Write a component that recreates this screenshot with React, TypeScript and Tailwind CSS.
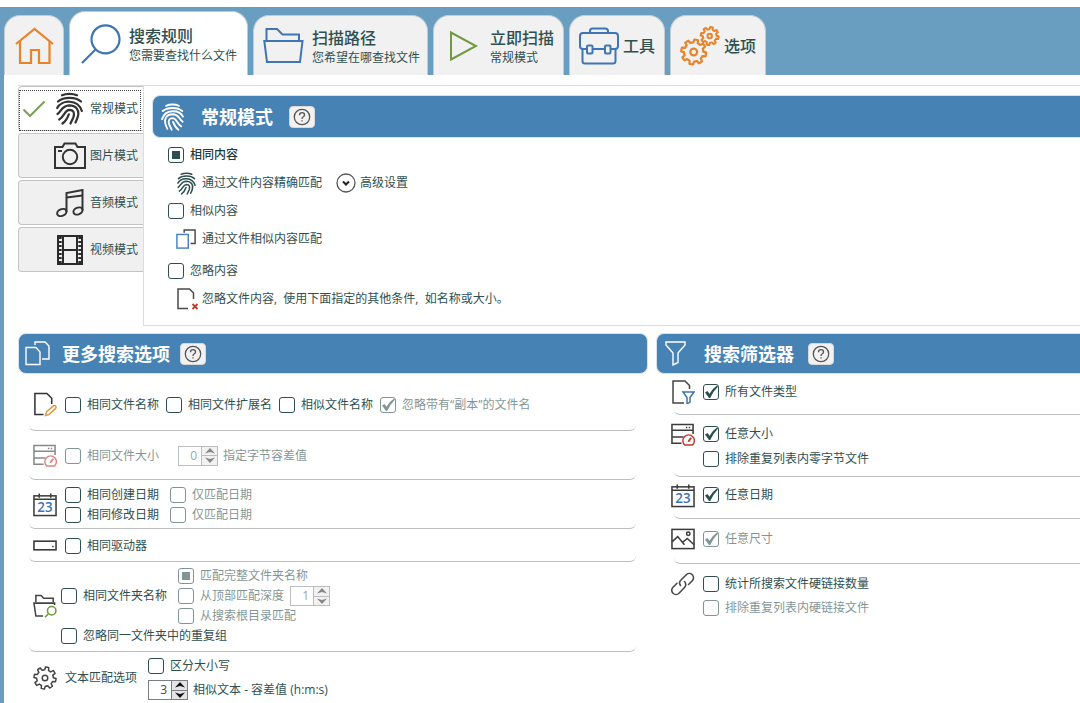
import { useState, type ReactNode } from "react";
import clsx from "clsx";

type IconProps = { className?: string };

// Outline of a gear with eight teeth, centred on cx / cy
const gearPath = (cx: number, cy: number, outer: number, inner: number) => {
  const teeth = 8;
  const step = (Math.PI * 2) / teeth;
  const at = (r: number, a: number) =>
    `${(cx + r * Math.cos(a)).toFixed(2)} ${(cy + r * Math.sin(a)).toFixed(2)}`;
  let d = "";
  for (let i = 0; i < teeth; i++) {
    const a = i * step + 0.2;
    d += `${i ? "L" : "M"}${at(inner, a - step * 0.3)}L${at(outer, a - step * 0.19)}`;
    d += `A${outer} ${outer} 0 0 1 ${at(outer, a + step * 0.19)}L${at(inner, a + step * 0.3)}`;
    d += `A${inner} ${inner} 0 0 1 ${at(inner, a + step * 0.7)}`;
  }
  return d + "Z";
};

const HomeIcon = () => (
  <svg className="w-[39px] h-[38px]" viewBox="0 0 39 38" fill="none" stroke="#e8832a" strokeWidth="2.2">
    <path d="M1 17L19.5 2L38 17" />
    <path d="M5 14V36H16V23H24V36H34.5V14" />
  </svg>
);

const SearchIcon = () => (
  <svg className="w-[42px] h-[42px]" viewBox="0 0 42 42" fill="none" stroke="#3f74b5" strokeWidth="2.2">
    <circle cx="25.5" cy="16.3" r="14" />
    <path d="M15.5 26.5L2 40" />
  </svg>
);

const FolderIcon = () => (
  <svg className="w-[41px] h-[37px]" viewBox="0 0 41 37" fill="none" stroke="#3f74b5" strokeWidth="2">
    <path d="M3.5 13V2H14L19.5 7.5H36V13" />
    <path d="M1.3 14H39.5L37 35H4Z" />
  </svg>
);

const PlayIcon = () => (
  <svg className="w-[29px] h-8" viewBox="0 0 29 32" fill="none" stroke="#6f9a3e" strokeWidth="2">
    <path d="M2 2.5V29.5L27 16Z" />
  </svg>
);

const ToolboxIcon = () => (
  <svg className="w-10 h-[38px]" viewBox="0 0 40 38" fill="none" stroke="#3f74b5" strokeWidth="2">
    <path d="M11 6V4Q11 1.5 13.5 1.5H26Q29 1.5 29 4V6" />
    <path d="M7.5 22H4Q1 22 1 19V9Q1 6 4 6H36Q39 6 39 9V19Q39 22 36 22H31.5M13.5 22H25.5" />
    <path d="M3.5 22V34Q3.5 36.5 6 36.5H34Q36.5 36.5 36.5 34V22" />
    <rect x="8" y="18.5" width="5.5" height="8" rx="1" />
    <rect x="26" y="18.5" width="5.5" height="8" rx="1" />
  </svg>
);

const GearsIcon = () => (
  <svg className="w-10 h-10" viewBox="0 0 40 40" fill="none" stroke="#e8832a" strokeWidth="2.2" strokeLinejoin="round">
    <path d={gearPath(13.7, 26, 12.5, 9.6)} />
    <circle cx="13.7" cy="26" r="3.4" />
    <path d={gearPath(29.7, 10, 9, 6.8)} strokeWidth="2" />
    <circle cx="29.7" cy="10" r="2.2" strokeWidth="2" />
  </svg>
);

const Fingerprint = ({ className }: IconProps) => (
  <svg className={className} viewBox="0 0 27 33" fill="none" stroke="currentColor" strokeWidth="2.2" strokeLinecap="round">
    <path d="M6 3.3C10 1.300 17 1.300 21 3.300" />
    <path d="M2 9.500C7.500 4.600 19.500 4.600 25 9.500" />
    <path d="M1.200 16C5.500 7.500 22 6.800 25.800 19" />
    <path d="M1.500 22C6 19 5.500 13.600 13.300 13.300C20.500 13.300 23.300 18.500 22 24C21.500 26.500 20.500 28.500 19.500 30.500" />
    <path d="M3.200 27.500C8.500 24.500 8.500 18 13.300 17.800C18 17.800 18.800 21.500 17.300 25.500L14.500 31.500" />
    <path d="M6.500 31.500C10 29 11.500 26 12.800 22.300" />
  </svg>
);

const CameraIcon = () => (
  <svg className="w-8 h-7" viewBox="0 0 32 28" fill="none" stroke="#333" strokeWidth="2">
    <path d="M1 5H8.5L10.5 1.5H21.5L23.5 5H31V26H1Z" />
    <circle cx="16" cy="15" r="7.2" />
    <path d="M4 9H8" />
  </svg>
);

const MusicIcon = () => (
  <svg className="w-7 h-7" viewBox="0 0 28 28" fill="none" stroke="#333" strokeWidth="2">
    <path d="M10.500 23V4L26.500 1V21.500" />
    <path d="M10.500 8.500L26.500 6.500" />
    <ellipse cx="5.800" cy="23.500" rx="4.800" ry="3.300" transform="rotate(-22 5.800 23.500)" />
    <ellipse cx="22" cy="22" rx="4.700" ry="3.300" transform="rotate(-22 22 22)" />
  </svg>
);

const FilmIcon = () => (
  <svg className="w-[26px] h-[30px]" viewBox="0 0 26 30" fill="none" stroke="#2b2b2b" strokeWidth="2">
    <rect x="1" y="1" width="24" height="28" />
    <path d="M6 1V29M20 1V29M6 15H20" />
    <path d="M3.2 2V28M22.8 2V28" strokeWidth="3" strokeDasharray="2 2" />
  </svg>
);

const CopiesIcon = () => (
  <svg className="w-[22px] h-[22px]" viewBox="0 0 22 22" fill="none" strokeWidth="1.6">
    <path d="M9 4V1H21V16H16" stroke="#4a4a4a" />
    <rect x="1" y="6" width="12.5" height="15" stroke="#4a80c4" />
  </svg>
);

const PagesIcon = () => (
  <svg className="w-[25px] h-[25px]" viewBox="0 0 25 25" fill="none" stroke="#fff" strokeWidth="1.4">
    <path d="M1 6.5H11L15 11V23.5H1Z" />
    <path d="M10 4V1H20L24 5V18H17" />
  </svg>
);

const DocDeleteIcon = () => (
  <svg className="w-[22px] h-[22px]" viewBox="0 0 22 22" fill="none">
    <path d="M11 20.5H1V1H12.5L16.5 5V11" stroke="#4a4a4a" strokeWidth="1.5" />
    <path d="M15.5 16L20.5 21M20.5 16L15.5 21" stroke="#c0392b" strokeWidth="1.8" />
  </svg>
);

const DocEditIcon = () => (
  <svg className="w-[25px] h-[25px]" viewBox="0 0 25 25" fill="none">
    <path d="M11 23H2V1H14.5L19.5 6V12" stroke="#333" strokeWidth="1.6" />
    <path d="M13 24L14.2 20L21.5 13.8Q23.5 13 24 15Q24.2 16 23.3 16.8L16.5 23Z" stroke="#d99a3c" strokeWidth="1.5" />
  </svg>
);

const DocFilterIcon = () => (
  <svg className="w-6 h-6" viewBox="0 0 24 24" fill="none">
    <path d="M13 23H2V1H14L18.5 5.5V9" stroke="#444" strokeWidth="1.5" />
    <path d="M12 12H23L19 17.5V22L16 24V17.5Z" stroke="#3f74b5" strokeWidth="1.5" />
  </svg>
);

const SizeIcon = () => (
  <svg className="w-[25px] h-6" viewBox="0 0 25 24" fill="none">
    <path d="M23 11V1H1V20.5H11M1 7H23M1 14H13" stroke="#3c3c3c" strokeWidth="1.6" />
    <path d="M15.5 4.2H17M18.5 4.2H20" stroke="#3c3c3c" strokeWidth="1.5" />
    <path d="M14.5 22.5A6 6 0 1 1 22.2 22.5Z" stroke="#c0392b" strokeWidth="1.5" strokeLinejoin="round" />
    <path d="M18 19L21 14.8" stroke="#c0392b" strokeWidth="2" />
  </svg>
);

const CalendarIcon = () => (
  <svg className="w-[25px] h-[25px]" viewBox="0 0 25 25" fill="none" stroke="#3c3c3c">
    <rect x="1" y="3.5" width="23" height="20.5" strokeWidth="1.6" />
    <path d="M1 7H24M6.5 1V5.500M18.500 1V5.500" strokeWidth="1.6" />
    <text x="12.5" y="20.8" textAnchor="middle" fill="#3f74b5" stroke="none" fontSize="14" fontWeight="600" fontFamily="Open Sans, sans-serif">
      23
    </text>
  </svg>
);

const DriveIcon = () => (
  <svg className="w-[25px] h-[11px]" viewBox="0 0 25 11" fill="none" stroke="#333">
    <rect x="1" y="1" width="23" height="9" strokeWidth="1.6" />
    <path d="M20 6.5H21.5" strokeWidth="1.5" />
  </svg>
);

const FolderSearchIcon = () => (
  <svg className="w-[25px] h-[25px]" viewBox="0 0 25 25" fill="none">
    <path d="M3 8V1H8.5L11 4H21V8" stroke="#444" strokeWidth="1.6" />
    <path d="M10.5 22.5H3L1 9H22.5V11" stroke="#444" strokeWidth="1.6" />
    <circle cx="19.5" cy="17" r="4.4" stroke="#6f9a3e" strokeWidth="1.6" />
    <path d="M16 20L12.5 23.8" stroke="#6f9a3e" strokeWidth="1.6" />
  </svg>
);

const SettingsIcon = () => (
  <svg className="w-[26px] h-[26px]" viewBox="0 0 26 26" fill="none" stroke="#444" strokeWidth="1.6" strokeLinejoin="round">
    <path d={gearPath(13, 13, 12, 9)} />
    <circle cx="13" cy="13" r="3" />
  </svg>
);

const ImageIcon = () => (
  <svg className="w-[25px] h-[22px]" viewBox="0 0 25 22" fill="none" stroke="#3c3c3c" strokeWidth="1.6">
    <rect x="1" y="1" width="23" height="20" />
    <path d="M1 14L7 8.5L14 17M12 14.5L17 10.5L24 17" />
    <circle cx="18" cy="5.5" r="1.8" />
  </svg>
);

const LinkIcon = () => (
  <svg className="w-6 h-6" viewBox="0 0 24 24" fill="none" stroke="#4a4a4a" strokeWidth="1.6" strokeLinecap="round">
    <path d="M9.5 13.5A4.2 4.2 0 0 1 10 8L15.3 2.7A4.2 4.2 0 0 1 21.3 8.7L17.5 12.5" />
    <path d="M13.5 9.5A4.2 4.2 0 0 1 13.5 15.5L8 21.3A4.2 4.2 0 0 1 2 15.3L6 11.3" />
  </svg>
);

const FunnelIcon = () => (
  <svg className="w-[21px] h-[25px]" viewBox="0 0 21 25" fill="none" stroke="#fff" strokeWidth="1.4">
    <path d="M1 1H20V4L13 12V21.5L8 24V12L1 4Z" />
  </svg>
);

type OptionProps = {
  label: string;
  type?: "checkbox" | "radio";
  name?: string;
  checked?: boolean;
  disabled?: boolean;
  strong?: boolean;
};

const Option = ({ label, type = "checkbox", name, checked, disabled, strong }: OptionProps) => (
  <label className={clsx("flex items-center gap-1.5 whitespace-nowrap", disabled && "opacity-60", strong && "font-medium text-[#1f3a3a]")}>
    <span className="grid">
      <input
        type={type}
        name={name}
        defaultChecked={checked}
        disabled={disabled}
        className="peer col-start-1 row-start-1 size-4 appearance-none rounded-[3px] border border-[#2f4f4f] bg-white"
      />
      {type === "radio" ? (
        <span className="pointer-events-none col-start-1 row-start-1 hidden size-2 place-self-center bg-[#2f4f4f] peer-checked:block" />
      ) : (
        <svg
          className="pointer-events-none col-start-1 row-start-1 hidden size-4 peer-checked:block"
          viewBox="0 0 16 16"
          fill="#2f4f4f"
        >
          <path d="M2 8.5L4.5 7L6.500 9.700Q9.500 4.500 14 1.500L15 2.500Q10.500 7 7.200 14H6Z" />
        </svg>
      )}
    </span>
    {label}
  </label>
);

type SpinnerProps = { label: string; value: number; disabled?: boolean };

const Spinner = ({ label, value, disabled }: SpinnerProps) => {
  const [count, setCount] = useState(value);
  return (
    <span className={clsx("flex h-5 w-10 border border-[#7a7f85] bg-white", disabled && "opacity-50")}>
      <input
        type="number"
        aria-label={label}
        value={count}
        onChange={(e) => setCount(Number(e.target.value))}
        disabled={disabled}
        className="w-[22px] pr-1 text-right text-xs [appearance:textfield] [&::-webkit-inner-spin-button]:appearance-none"
      />
      <span className="flex w-4 flex-col border-l border-[#7a7f85]">
        <button
          type="button"
          aria-label="增加"
          disabled={disabled}
          onClick={() => setCount(count + 1)}
          className="flex flex-1 items-center justify-center border-b border-[#7a7f85] bg-[#e4e4e4]"
        >
          <svg className="h-1.5 w-2.5" viewBox="0 0 10 6" fill="#111"><path d="M0 5.5L5 0L10 5.500L5 4Z" /></svg>
        </button>
        <button
          type="button"
          aria-label="减少"
          disabled={disabled}
          onClick={() => setCount(count - 1)}
          className="flex flex-1 items-center justify-center bg-[#e4e4e4]"
        >
          <svg className="h-1.5 w-2.5" viewBox="0 0 10 6" fill="#111"><path d="M0 0.5L5 6L10 0.500L5 2Z" /></svg>
        </button>
      </span>
    </span>
  );
};

const HelpButton = () => (
  <button
    type="button"
    aria-label="帮助"
    className="flex h-[22px] w-[26px] items-center justify-center rounded border border-[#d8d8d8] bg-[#f2f2f2]"
  >
    <svg className="size-[18px]" viewBox="0 0 18 18" fill="none" stroke="#555" strokeWidth="1.3">
      <circle cx="9" cy="9" r="7.7" />
      <path d="M6.5 7.2Q6.500 4.700 9 4.700Q11.500 4.700 11.500 6.900Q11.500 8.200 10 9Q9 9.600 9 11" />
      <path d="M9 12.2V13.6" />
    </svg>
  </button>
);

type TabProps = { icon: ReactNode; title?: string; subtitle?: string; label?: string; active?: boolean; className?: string };

const Tab = ({ icon, title, subtitle, label, active, className }: TabProps) => (
  <button
    type="button"
    role="tab"
    aria-selected={!!active}
    aria-label={label}
    className={clsx(
      "flex items-center whitespace-nowrap rounded-t-2xl border border-b-0 border-[#c3cbd1] text-left",
      active ? "h-16 bg-white" : "h-[60px] bg-[#f1f1f1]",
      className
    )}
  >
    {icon}
    {title && (
      <span>
        <span className="block text-base leading-6 font-medium">{title}</span>
        {subtitle && <span className="block leading-4">{subtitle}</span>}
      </span>
    )}
  </button>
);

type ModeProps = { icon: ReactNode; title: string; active?: boolean };

const Mode = ({ icon, title, active }: ModeProps) => (
  <button
    type="button"
    role="tab"
    aria-selected={!!active}
    className={clsx(
      "relative flex h-[45px] items-center justify-end rounded-l border border-r-0 border-[#c4c4c4] pr-[5px]",
      active ? "bg-white" : "bg-[#f0f0f0]"
    )}
  >
    {active && (
      <>
        <svg className="mr-1.5 h-[18px] w-6" viewBox="0 0 24 18" fill="none" stroke="#7ba05b" strokeWidth="2">
          <path d="M1.5 9.5L8 16L22.5 1.5" />
        </svg>
        <span className="absolute inset-x-0 top-[3px] -bottom-px mr-0.5 border border-dotted border-[#444]" />
      </>
    )}
    <span className="mr-0.5 flex w-9 justify-center text-[#333]">{icon}</span>
    <span>{title}</span>
  </button>
);

const Divider = ({ className }: IconProps) => (
  <hr className={clsx("h-1.5 border-0 border-b border-[#bfbfbf]", className)} />
);

const leftDivider = "-mt-1.5 ml-[11px] mr-3 rounded-b-lg";
const rightDivider = "ml-[18px] rounded-bl-lg";

const IconCell = ({ children, className }: { children: ReactNode; className?: string }) => (
  <span className={clsx("flex w-6 shrink-0 justify-center", className)}>{children}</span>
);

const App = () => {
  return (
    <div className="flex min-h-screen flex-col overflow-x-hidden bg-white pt-[7px] font-['Open_Sans','Noto_Sans_CJK_SC',sans-serif] text-xs text-[#2f4f4f]">
      {/* Main tabs */}
      <nav role="tablist" className="flex h-[68px] items-end gap-[5px] bg-[#6a9ec1] pl-1">
        <Tab label="主页" icon={<HomeIcon />} className="w-[60px] justify-center" />
        <Tab active title="搜索规则" subtitle="您需要查找什么文件" icon={<SearchIcon />} className="gap-[7px] px-2.5" />
        <Tab title="扫描路径" subtitle="您希望在哪查找文件" icon={<FolderIcon />} className="gap-2 pr-[7px] pl-[9px]" />
        <Tab title="立即扫描" subtitle="常规模式" icon={<PlayIcon />} className="gap-3 pr-[9px] pl-[15px]" />
        <Tab title="工具" icon={<ToolboxIcon />} className="gap-1 px-[9px]" />
        <Tab title="选项" icon={<GearsIcon />} className="gap-1 px-[9px]" />
      </nav>

      <main className="flex-1 border-l-4 border-[#6a9ec1] pt-2.5 pl-3.5">
        {/* Scan mode */}
        <section className="flex border-t border-[#dcdcdc]">
          <div role="tablist" aria-orientation="vertical" className="flex w-[125px] shrink-0 flex-col gap-0.5">
            <Mode active title="常规模式" icon={<Fingerprint className="h-[33px] w-[27px]" />} />
            <Mode title="图片模式" icon={<CameraIcon />} />
            <Mode title="音频模式" icon={<MusicIcon />} />
            <Mode title="视频模式" icon={<FilmIcon />} />
          </div>

          <div className="flex-1 border-b border-l border-[#dcdcdc] pt-[9px] pb-3 pl-2">
            <header className="flex h-[43px] items-center rounded-l-lg border border-r-0 border-[#d5e3ef] bg-[#4682b4] pl-2 text-white">
              <Fingerprint className="h-7 w-[23px] -scale-x-100" />
              <h2 className="mr-4 ml-[17px] text-lg leading-6 font-bold">常规模式</h2>
              <HelpButton />
            </header>
            <div className="pt-[3px] pl-4">
              <div className="flex h-7 items-center">
                <Option type="radio" name="content" label="相同内容" checked strong />
              </div>
              <div className="flex h-7 items-center pl-2">
                <IconCell className="mr-0.5 pr-1"><Fingerprint className="h-[23px] w-[19px]" /></IconCell>
                通过文件内容精确匹配
                <button type="button" className="ml-3.5 flex items-center gap-1">
                  <svg className="size-5" viewBox="0 0 20 20" fill="none" stroke="#555" strokeWidth="1.3">
                    <circle cx="10" cy="10" r="9" />
                    <path d="M7 8.5L10 11.5L13 8.5" stroke="#222" strokeWidth="2" />
                  </svg>
                  高级设置
                </button>
              </div>
              <div className="flex h-7 items-center">
                <Option type="radio" name="content" label="相似内容" />
              </div>
              <div className="flex h-7 items-center pl-2">
                <IconCell className="mr-0.5 pr-1"><CopiesIcon /></IconCell>
                通过文件相似内容匹配
              </div>
              <div className="mt-1 flex h-7 items-center">
                <Option type="radio" name="content" label="忽略内容" />
              </div>
              <div className="flex h-7 items-center pl-2">
                <IconCell className="mr-0.5"><DocDeleteIcon /></IconCell>
                忽略文件内容,&nbsp; 使用下面指定的其他条件,&nbsp; 如名称或大小。
              </div>
            </div>
          </div>
        </section>

        <div className="mt-[7px] grid grid-cols-[minmax(0,630fr)_minmax(0,424fr)] gap-2">
          {/* More search options */}
          <section>
            <header className="flex h-[41px] items-center rounded-lg border border-[#d5e3ef] bg-[#4682b4] pl-1.5 text-white">
              <PagesIcon />
              <h2 className="mr-2.5 ml-3 text-lg leading-6 font-bold">更多搜索选项</h2>
              <HelpButton />
            </header>

            <div className="flex h-[57px] items-center gap-[7px] pt-1 pl-[15px]">
              <IconCell className="mr-px"><DocEditIcon /></IconCell>
              <Option label="相同文件名称" />
              <Option label="相同文件扩展名" />
              <Option label="相似文件名称" />
              <Option label="忽略带有“副本”的文件名" checked disabled />
            </div>
            <Divider className={leftDivider} />

            <div className="flex h-[49px] items-center pl-[15px]">
              <IconCell className="mr-2 opacity-60"><SizeIcon /></IconCell>
              <Option label="相同文件大小" disabled />
              <div className="ml-[19px] flex items-center gap-[5px]">
                <Spinner label="指定字节容差值" value={0} disabled />
                <span className="opacity-60">指定字节容差值</span>
              </div>
            </div>
            <Divider className={leftDivider} />

            <div className="flex h-[49px] items-center gap-2 pl-[15px]">
              <IconCell><CalendarIcon /></IconCell>
              <div>
                <div className="flex h-5 items-center gap-[11px]">
                  <Option label="相同创建日期" />
                  <Option label="仅匹配日期" disabled />
                </div>
                <div className="flex h-5 items-center gap-[11px]">
                  <Option label="相同修改日期" />
                  <Option label="仅匹配日期" disabled />
                </div>
              </div>
            </div>
            <Divider className={leftDivider} />

            <div className="flex h-[33px] items-center gap-2 pl-[15px]">
              <IconCell><DriveIcon /></IconCell>
              <Option label="相同驱动器" />
            </div>
            <Divider className={leftDivider} />

            <div className="flex h-[90px] items-center gap-1 pb-0.5 pl-[15px]">
              <IconCell><FolderSearchIcon /></IconCell>
              <div>
                <div className="flex items-center gap-[11px]">
                  <Option label="相同文件夹名称" />
                  <div>
                    <div className="flex h-5 items-center">
                      <Option type="radio" name="folder" label="匹配完整文件夹名称" checked disabled />
                    </div>
                    <div className="flex h-5 items-center gap-1.5">
                      <Option type="radio" name="folder" label="从顶部匹配深度" disabled />
                      <Spinner label="匹配深度" value={1} disabled />
                    </div>
                    <div className="flex h-5 items-center">
                      <Option type="radio" name="folder" label="从搜索根目录匹配" disabled />
                    </div>
                  </div>
                </div>
                <div className="flex h-5 items-center">
                  <Option label="忽略同一文件夹中的重复组" />
                </div>
              </div>
            </div>
            <Divider className={leftDivider} />

            <div className="flex items-center pt-0.5 pl-[15px]">
              <IconCell className="mr-2"><SettingsIcon /></IconCell>
              文本匹配选项
              <div className="ml-[11px]">
                <div className="flex h-6 items-center">
                  <Option label="区分大小写" />
                </div>
                <div className="flex h-6 items-center gap-[5px]">
                  <Spinner label="容差值" value={3} />
                  相似文本 - 容差值 (h:m:s)
                </div>
              </div>
            </div>
          </section>

          {/* Search filters */}
          <section>
            <header className="flex h-[41px] items-center rounded-l-lg border border-r-0 border-[#d5e3ef] bg-[#4682b4] pl-2 text-white">
              <FunnelIcon />
              <h2 className="mr-3.5 ml-[18px] text-lg leading-6 font-bold">搜索筛选器</h2>
              <HelpButton />
            </header>

            <div className="flex h-[35px] items-center gap-2 pl-[15px]">
              <IconCell><DocFilterIcon /></IconCell>
              <Option label="所有文件类型" checked />
            </div>
            <Divider className={rightDivider} />

            <div className="flex h-14 items-start gap-2 pt-1.5 pl-[15px]">
              <IconCell className="pt-0.5"><SizeIcon /></IconCell>
              <div>
                <div className="flex h-[25px] items-center">
                  <Option label="任意大小" checked />
                </div>
                <div className="flex h-[25px] items-center">
                  <Option label="排除重复列表内零字节文件" />
                </div>
              </div>
            </div>
            <Divider className={rightDivider} />

            <div className="flex h-9 items-center gap-2 pl-[15px]">
              <IconCell><CalendarIcon /></IconCell>
              <Option label="任意日期" checked />
            </div>
            <Divider className={rightDivider} />

            <div className="flex h-[39px] items-center gap-2 pl-[15px]">
              <IconCell><ImageIcon /></IconCell>
              <Option label="任意尺寸" checked disabled />
            </div>
            <Divider className={rightDivider} />

            <div className="flex items-start gap-2 pt-2 pl-[15px]">
              <IconCell><LinkIcon /></IconCell>
              <div>
                <div className="flex h-6 items-center">
                  <Option label="统计所搜索文件硬链接数量" />
                </div>
                <div className="flex h-6 items-center">
                  <Option label="排除重复列表内硬链接文件" disabled />
                </div>
              </div>
            </div>
          </section>
        </div>
      </main>
    </div>
  );
};

export default App;
